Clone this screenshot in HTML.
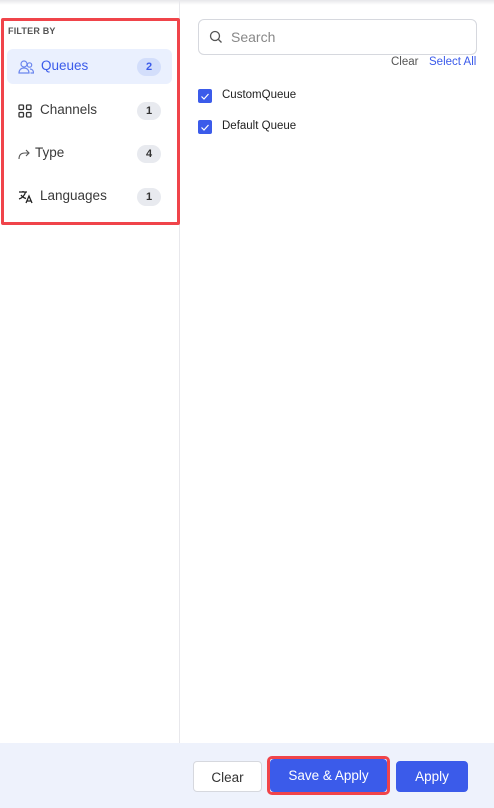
<!DOCTYPE html>
<html><head><meta charset="utf-8"><style>
*{box-sizing:border-box;margin:0;padding:0}
body{width:494px;height:808px;background:#fff;font-family:"Liberation Sans",sans-serif;position:relative;overflow:hidden;color:#333}
.topsh{position:absolute;left:0;top:0;width:494px;height:5px;background:linear-gradient(#e6e6ea,#fff)}
.left{position:absolute;left:0;top:0;width:180px;height:743px;border-right:1px solid #e8e8ec}
.red{position:absolute;left:1px;top:18px;width:179px;height:207px;border:3px solid #f0444a;border-radius:2px}
.fb{position:absolute;left:8px;top:26px;font-size:9px;font-weight:bold;color:#555;letter-spacing:.2px}
.item{position:absolute;left:7px;width:165px;height:35px;border-radius:6px;font-size:13.5px;color:#3a3a3a}
.item.act{background:#eaf0fe;color:#3b5bea}
.item .ic{position:absolute;left:11px;top:11px}
.item .lb{position:absolute;top:9px}
.badge{position:absolute;right:11px;top:9px;height:18px;min-width:24px;border-radius:9px;background:#e8eaef;font-size:11px;font-weight:bold;text-align:center;line-height:18px;color:#333}
.act .badge{background:#d3defb;color:#3b5bea}
.search{position:absolute;left:198px;top:19px;width:279px;height:36px;border:1px solid #d6d8de;border-radius:6px}
.search span{position:absolute;left:32px;top:9px;font-size:14px;color:#888}
.lnk{position:absolute;top:56px;font-size:11.5px}
.cb{position:absolute;left:198px;width:14px;height:14px;background:#3b5bea;border-radius:2px}
.cbl{position:absolute;left:222px;font-size:11.5px;color:#222}
.foot{position:absolute;left:0;top:743px;width:494px;height:65px;background:#eef2fc}
.btn{position:absolute;height:31px;border-radius:4px;font-size:13.5px;text-align:center;line-height:31px}
</style></head><body>
<div class="topsh"></div>
<div class="left"></div>
<div class="fb">FILTER BY</div>
<div class="item act" style="top:49px"><svg class="ic" width="16" height="14" viewBox="0 0 16 14" fill="none" stroke="#6b86ee" stroke-width="1.2"><circle cx="6" cy="4" r="3"/><path d="M1 13c0-3 2-5 5-5s5 2 5 5z"/><circle cx="11.5" cy="5" r="2.2"/><path d="M12 9c2 0 3.5 1.5 3.5 4h-3"/></svg><span class="lb" style="left:34px">Queues</span><div class="badge">2</div></div>
<div class="item" style="top:93px"><svg class="ic" width="14" height="14" viewBox="0 0 14 14" fill="none" stroke="#333" stroke-width="1.3"><rect x="1" y="1" width="4.5" height="4.5" rx="1"/><rect x="8.5" y="1" width="4.5" height="4.5" rx="1"/><rect x="1" y="8.5" width="4.5" height="4.5" rx="1"/><rect x="8.5" y="8.5" width="4.5" height="4.5" rx="1"/></svg><span class="lb" style="left:33px">Channels</span><div class="badge">1</div></div>
<div class="item" style="top:136px"><svg class="ic" width="12" height="14" viewBox="0 0 12 14" fill="none" stroke="#555" stroke-width="1.1"><path d="M1 12c0-4 2-6 6-6h4M8 3l3 3-3 3"/></svg><span class="lb" style="left:28px">Type</span><div class="badge">4</div></div>
<div class="item" style="top:179px"><svg class="ic" width="16" height="14" viewBox="0 0 16 14" fill="none" stroke="#222" stroke-width="1.3"><path d="M1 2h8M5 1v1M7.5 2C6.5 6 4 8 1 9M3 5c1.5 2 3 3 5 3.5M8 13l3-7 3 7M9 11h4"/></svg><span class="lb" style="left:33px">Languages</span><div class="badge">1</div></div>
<div class="red"></div>
<div class="search"><svg style="position:absolute;left:10px;top:10px" width="14" height="14" viewBox="0 0 14 14" fill="none" stroke="#555" stroke-width="1.3"><circle cx="6" cy="6" r="4.5"/><path d="M9.5 9.5l3 3"/></svg><span>Search</span></div>
<div class="lnk" style="left:391px;color:#555">Clear</div>
<div class="lnk" style="left:429px;color:#3b5bea">Select All</div>
<div class="cb" style="top:89px"><svg width="14" height="14" viewBox="0 0 14 14" fill="none" stroke="#fff" stroke-width="1.2"><path d="M3.5 7.5l2.5 2.5 4.5-5"/></svg></div>
<div class="cbl" style="top:89px">CustomQueue</div>
<div class="cb" style="top:120px"><svg width="14" height="14" viewBox="0 0 14 14" fill="none" stroke="#fff" stroke-width="1.2"><path d="M3.5 7.5l2.5 2.5 4.5-5"/></svg></div>
<div class="cbl" style="top:120px">Default Queue</div>
<div class="foot"></div>
<div class="btn" style="left:193px;top:761px;width:69px;background:#fff;border:1px solid #d6d8de;color:#333">Clear</div>
<div style="position:absolute;left:267px;top:756px;width:123px;height:39px;border:3px solid #f0444a;border-radius:5px"></div>
<div class="btn" style="left:270px;top:759px;width:117px;height:33px;line-height:33px;background:#3b5bea;color:#fff">Save &amp; Apply</div>
<div class="btn" style="left:396px;top:761px;width:72px;background:#3b5bea;color:#fff">Apply</div>
</body></html>
